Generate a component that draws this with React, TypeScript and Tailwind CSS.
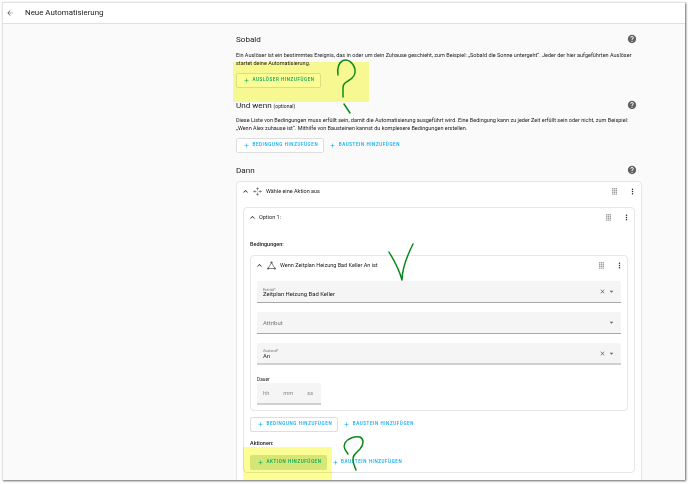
import { MdAdd, MdArrowBack, MdArrowDropDown, MdClose, MdHelp, MdKeyboardArrowUp, MdMoreVert } from "react-icons/md";

const Drag = () => (
  <svg width="5" height="7" viewBox="0 0 10 14" fill="#9e9e9e" className="shrink-0">
    <path d="M0 0h2.6v2.6H0zM3.7 0h2.6v2.6H3.7zM7.4 0H10v2.6H7.4zM0 3.7h2.6v2.6H0zM3.7 3.7h2.6v2.6H3.7zM7.4 3.7H10v2.6H7.4zM0 7.4h2.6V10H0zM3.7 7.4h2.6V10H3.7zM7.4 7.4H10V10H7.4zM0 11.1h2.6v2.6H0zM3.7 11.1h2.6v2.6H3.7zM7.4 11.1H10v2.6H7.4z" />
  </svg>
);

function AddButton({ label, outlined, filled, color = "text-[#03a9f4]" }: { label: string; outlined?: boolean; filled?: boolean; color?: string }) {
  return (
    <div
      className={`flex items-center h-[15px] rounded-[2px] text-[4.5px] font-medium tracking-[0.6px] whitespace-nowrap ${color} ${
        outlined ? "border border-[#dedede] bg-white pl-[6px] pr-[5px]" : ""
      } ${filled ? "bg-[#d5e8c8] pl-[7px] pr-[5px]" : ""}`}
    >
      <MdAdd className="text-[7px] mr-[2.5px]" />
      {label}
    </div>
  );
}

function SectionTitle({ title, note }: { title: string; note?: string }) {
  return (
    <div className="flex items-center justify-between h-[12px] pr-[5px]">
      <div className="text-[8.1px] text-[#212121] leading-none">
        {title}
        {note && <span className="text-[5px] ml-[2px]">{note}</span>}
      </div>
      <MdHelp className="text-[10px] text-[#616161]" />
    </div>
  );
}

function Field({ label, value, clear, thick }: { label?: string; value: string; clear?: boolean; thick?: boolean }) {
  return (
    <div
      className={`flex items-center h-[22px] bg-[#f5f5f5] rounded-t-[2px] pl-[6px] pr-[6px] border-b ${
        thick ? "border-b-2 border-[#d0d0d0]" : "border-[#a8a8a8]"
      }`}
    >
      <div className="flex-1 leading-none pt-[3px]">
        {label && <div className="text-[3.8px] text-[#757575] mb-[1px]">{label}</div>}
        <div className={`text-[5.9px] ${label ? "text-[#212121]" : "text-[#757575]"}`}>{value}</div>
      </div>
      {clear && <MdClose className="text-[7px] text-[#616161]" />}
      <MdArrowDropDown className="text-[9px] text-[#616161] ml-[1px] -mr-[1px]" />
    </div>
  );
}

function RowHeader({ icon, title }: { icon?: React.ReactNode; title: string }) {
  return (
    <div className="flex items-center text-[5.5px] text-[#212121] h-[9px]">
      <MdKeyboardArrowUp className="text-[9px] shrink-0 -ml-[2px]" />
      {icon && <span className="ml-[3px] mr-[4px] flex">{icon}</span>}
      <span className={`flex-1 ${icon ? "" : "ml-[2px]"}`}>{title}</span>
      <Drag />
      <MdMoreVert className="text-[9px] ml-[11px] -mr-[3px] shrink-0" />
    </div>
  );
}

export default function App() {
  return (
    <div className="relative w-[690px] h-[484px] overflow-hidden bg-white pl-[2px] pt-[2px] font-['Roboto',sans-serif]">
      <div className="w-[683px] h-[478px] bg-[#fafafa] overflow-hidden shadow-[1px_1px_2px_rgba(0,0,0,0.6)] border-l border-t border-[#e4e4e4]">
        {/* Toolbar */}
        <div className="flex items-center h-[21px] bg-white border-b border-[#e0e0e0] pl-[3px]">
          <MdArrowBack className="text-[8px] text-[#616161]" />
          <span className="ml-[11px] text-[7.9px] text-[#212121]">Neue Automatisierung</span>
        </div>

        <div className="pl-[233px] pr-[43px] pt-[9px]">
          <SectionTitle title="Sobald" />
          <p className="mt-[6px] text-[5.5px] leading-[8px] text-[#212121] whitespace-nowrap">
            Ein Auslöser ist ein bestimmtes Ereignis, das in oder um dein Zuhause geschieht, zum Beispiel: „Sobald die Sonne untergeht“. Jeder der hier aufgeführten Auslöser
            <br />
            startet deine Automatisierung.
          </p>
          <div className="mt-[6px] flex">
            <AddButton label="AUSLÖSER HINZUFÜGEN" outlined color="text-[#00a58e]" />
          </div>

          <div className="mt-[11px]">
            <SectionTitle title="Und wenn" note="(optional)" />
          </div>
          <p className="mt-[5px] text-[5.5px] leading-[8px] text-[#212121] whitespace-nowrap">
            Diese Liste von Bedingungen muss erfüllt sein, damit die Automatisierung ausgeführt wird. Eine Bedingung kann zu jeder Zeit erfüllt sein oder nicht, zum Beispiel:
            <br />
            „Wenn Alex zuhause ist“. Mithilfe von Bausteinen kannst du komplexere Bedingungen erstellen.
          </p>
          <div className="mt-[6px] flex items-center gap-[5px]">
            <AddButton label="BEDINGUNG HINZUFÜGEN" outlined />
            <AddButton label="BAUSTEIN HINZUFÜGEN" />
          </div>

          <div className="mt-[11px]">
            <SectionTitle title="Dann" />
          </div>

          {/* Outer action card */}
          <div className="mt-[5px] h-[320px] border border-[#e6e6e6] rounded-[4px] bg-white pt-[5px] pl-[6px] pr-[6px]">
            <div className="pr-[1px]">
              <RowHeader
                title="Wähle eine Aktion aus"
                icon={
                  <svg width="9" height="9" viewBox="0 0 24 24" fill="none" stroke="#616161" strokeWidth="2">
                    <path d="M12 2v7M12 15v7M2 12h7M15 12h7M9 5l3-3 3 3M9 19l3 3 3-3M5 9l-3 3 3 3M19 9l3 3-3 3" />
                  </svg>
                }
              />
            </div>

            {/* Option card */}
            <div className="mt-[11px] h-[266px] border border-[#e6e6e6] rounded-[4px] bg-white pt-[5px] pl-[6px] pr-[6px]">
              <RowHeader title="Option 1:" />
              <div className="mt-[18px] text-[5.5px] font-medium text-[#212121] leading-[8px]">Bedingungen:</div>

              {/* Condition card */}
              <div className="mt-[7px] h-[156px] border border-[#e6e6e6] rounded-[4px] bg-white pt-[5px] pl-[6px] pr-[6px]">
                <RowHeader
                  title="Wenn Zeitplan Heizung Bad Keller An ist"
                  icon={
                    <svg width="9" height="9" viewBox="0 0 24 24" fill="none" stroke="#616161" strokeWidth="2">
                      <path d="M12 4 3 20h18z" />
                      <circle cx="12" cy="4" r="2" fill="#616161" />
                      <circle cx="3" cy="20" r="2" fill="#616161" />
                      <circle cx="21" cy="20" r="2" fill="#616161" />
                    </svg>
                  }
                />
                <div className="mt-[11px] flex flex-col gap-[9px]">
                  <Field label="Entität*" value="Zeitplan Heizung Bad Keller" clear />
                  <Field value="Attribut" />
                  <Field label="Zustand*" value="An" clear thick />
                </div>
                <div className="mt-[11px] text-[4.8px] text-[#212121] leading-[7px]">Dauer</div>
                <div className="flex items-center h-[22px] w-[64px] bg-[#f5f5f5] border-b-2 border-[#d0d0d0] pl-[6px] text-[5.7px] text-[#8a8a8a] gap-[14px]">
                  <span>hh</span>
                  <span>mm</span>
                  <span>ss</span>
                </div>
              </div>

              <div className="mt-[6px] flex items-center gap-[5px]">
                <AddButton label="BEDINGUNG HINZUFÜGEN" outlined />
                <AddButton label="BAUSTEIN HINZUFÜGEN" />
              </div>
              <div className="mt-[7px] text-[5.5px] font-medium text-[#212121] leading-[8px]">Aktionen:</div>
              <div className="mt-[8px] flex items-center gap-[5px]">
                <AddButton label="AKTION HINZUFÜGEN" filled color="text-[#00a58e]" />
                <AddButton label="BAUSTEIN HINZUFÜGEN" />
              </div>
            </div>
          </div>
        </div>
      </div>

      {/* Highlighter marks */}
      <div className="absolute left-[233px] top-[62px] w-[136px] h-[40px] bg-[#fdfd96] mix-blend-multiply" />
      <div className="absolute left-[243px] top-[447px] w-[89px] h-[33px] bg-[#fdfd96] mix-blend-multiply" />

      {/* Pen scribbles */}
      <svg className="absolute inset-0 pointer-events-none" width="690" height="484" fill="none" stroke="#0b8a1c" strokeWidth="1.5" strokeLinecap="round" strokeLinejoin="round">
        <path d="M338 75C337 68 338 63 343 60.5C348 59 353 62 355 69C356 75 353 78 348 81C345 83 343 84 343 88L343 97" />
        <path d="M344 104L350 113" />
        <path d="M389 252C393 259 398 266 402 280C402 270 406 258 413 244" />
        <path d="M348 454C345 450 343 447 345 443C348 438 355 436 360 437C364 439 364 444 360 449C356 453 352 456 353 460C353 464 355 467 356 470" />
      </svg>
    </div>
  );
}
